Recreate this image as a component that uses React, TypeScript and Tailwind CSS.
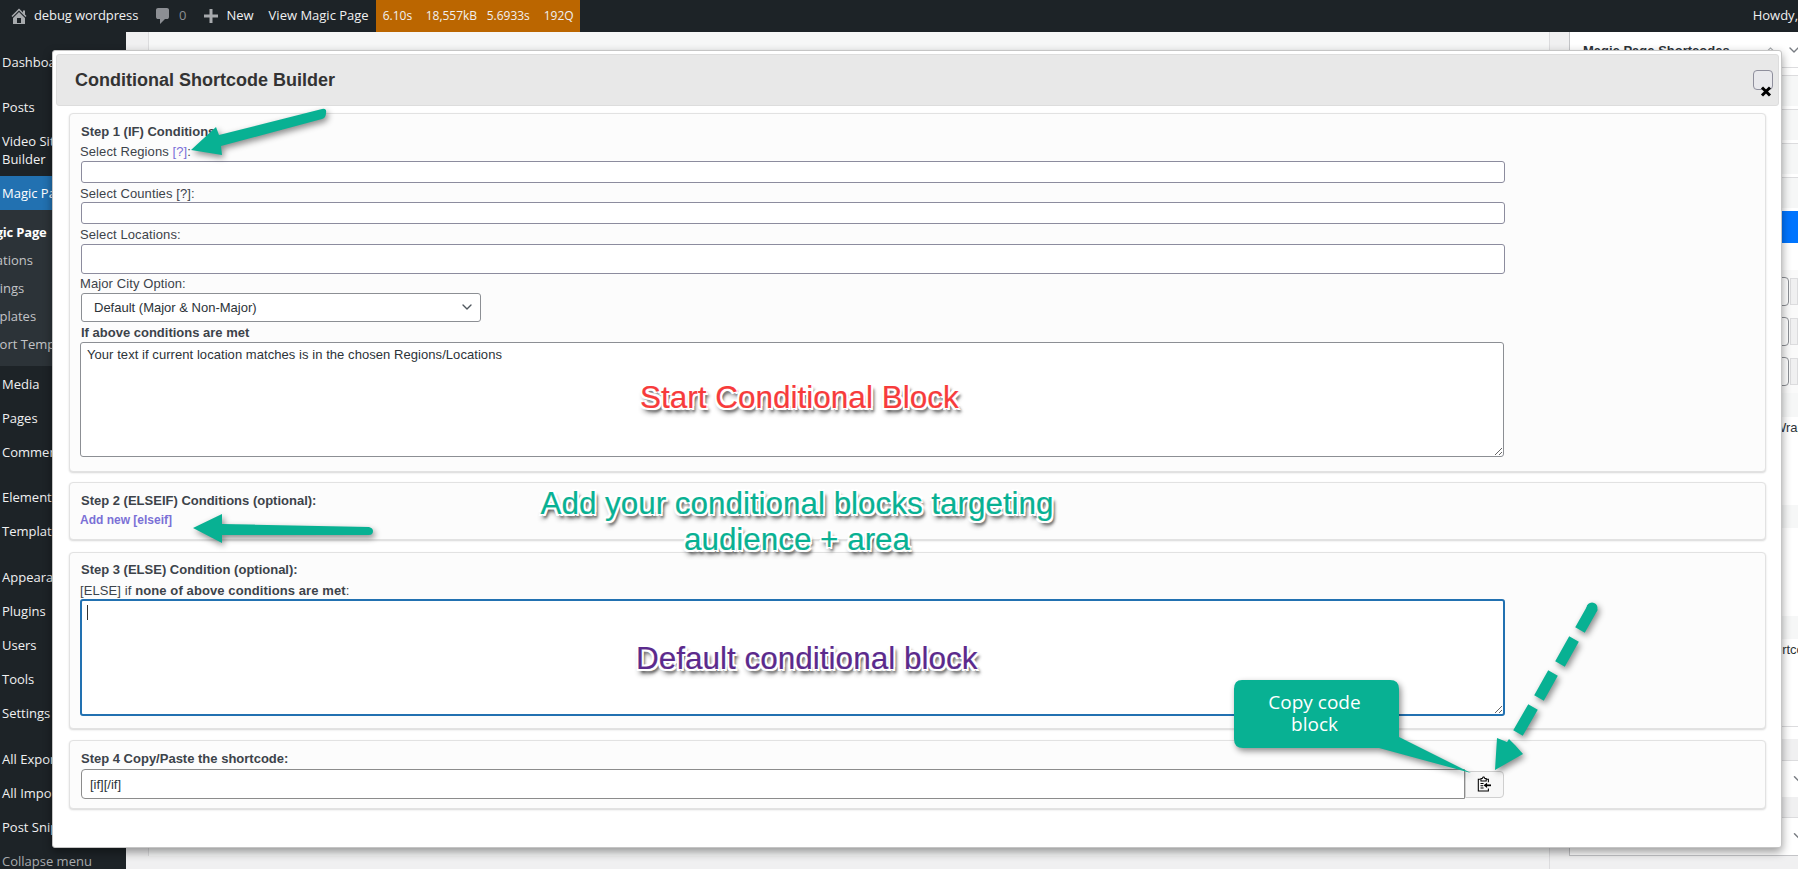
import { ChevronDown, ChevronUp } from "lucide-react";

const sans = "font-['Open_Sans','Noto_Sans',sans-serif]";
const arial = "font-['Liberation_Sans',Arial,sans-serif]";
const haloShadow =
  "[-webkit-text-stroke:0.2px_currentColor] [text-shadow:1px_0_0_#fff,-1px_0_0_#fff,0_1px_0_#fff,0_-1px_0_#fff,2px_2px_0_#fff,-2px_-2px_0_#fff,2px_-2px_0_#fff,-2px_2px_0_#fff,3px_4px_3px_rgba(0,0,0,0.6),1px_5px_5px_rgba(0,0,0,0.45)]";

function AdminBar() {
  return (
    <div className={`flex h-8 shrink-0 items-center bg-[#1d2327] text-[13px] text-[#f0f0f1] ${sans}`}>
      <svg viewBox="0 0 20 20" className="ml-[9px] h-5 w-5 fill-[#a7aaad]">
        <path d="M16 8.5l1.53 1.53-1.06 1.06L10 4.62l-6.47 6.47-1.06-1.06L10 2.5l4 4v-2h2v4zm-6-2.46l6 5.99V18H4v-5.97zM12 17v-5H8v5h4z" />
      </svg>
      <span className="ml-[5px] w-[105px] tracking-[-0.1px]">debug wordpress</span>
      <svg viewBox="0 0 20 20" className="ml-[14px] h-5 w-5 fill-[#8c8f94]">
        <path d="M5 2h9q.82 0 1.41.59T16 4v7q0 .82-.59 1.41T14 13h-2l-5 5v-5H5q-.82 0-1.41-.59T3 11V4q0-.82.59-1.41T5 2z" />
      </svg>
      <span className="ml-[6px] text-[#8c8f94]">0</span>
      <svg viewBox="0 0 20 20" className="ml-[15px] h-5 w-5 fill-[#a7aaad]">
        <path d="M17 8.5v3h-5.5V17h-3v-5.5H3v-3h5.5V3h3v5.5H17z" />
      </svg>
      <span className="ml-[5px]">New</span>
      <span className="ml-[15px]">View Magic Page</span>
      <div className="ml-[7px] flex h-8 w-[204px] items-center bg-[#bb6600] pl-[7px] text-[12px]">
        <span className="w-[43px]">6.10s</span>
        <span className="w-[61px]">18,557kB</span>
        <span className="w-[57px]">5.6933s</span>
        <span>192Q</span>
      </div>
      <span className="ml-auto whitespace-nowrap">Howdy,</span>
    </div>
  );
}

function MenuItem({ label, className = "" }: { label: string; className?: string }) {
  return (
    <div className={`flex h-[34px] items-center whitespace-nowrap pl-[2px] pt-px ${className}`}>{label}</div>
  );
}

function Sidebar() {
  return (
    <aside className={`w-[126px] shrink-0 overflow-hidden bg-[#1d2327] pt-[13px] text-[13px] text-[#f0f0f1] ${sans}`}>
      <MenuItem label="Dashboard" />
      <MenuItem label="Posts" className="mt-[11px]" />
      <div className="flex h-[52px] flex-col justify-center pl-[2px] leading-[18px]">
        <span>Video Site</span>
        <span>Builder</span>
      </div>
      <MenuItem label="Magic Page" className="bg-[#2271b1] text-white" />
      <div className="bg-[#2c3338] pb-[7px] pt-[9px] text-[#c3c4c7]">
        <div className="-ml-[24px] flex h-[28px] items-center font-bold tracking-[-0.2px] whitespace-nowrap text-white">Magic Page</div>
        <div className="-ml-[25px] flex h-[28px] items-center whitespace-nowrap">Locations</div>
        <div className="-ml-[24px] flex h-[28px] items-center whitespace-nowrap">Settings</div>
        <div className="-ml-[27px] flex h-[28px] items-center whitespace-nowrap">Templates</div>
        <div className="-ml-[24px] flex h-[28px] items-center whitespace-nowrap">Import Templates</div>
      </div>
      <MenuItem label="Media" className="mt-px" />
      <MenuItem label="Pages" />
      <MenuItem label="Comments" />
      <MenuItem label="Elementor" className="mt-[11px]" />
      <MenuItem label="Templates" />
      <MenuItem label="Appearance" className="mt-[12px]" />
      <MenuItem label="Plugins" />
      <MenuItem label="Users" />
      <MenuItem label="Tools" />
      <MenuItem label="Settings" />
      <MenuItem label="All Export" className="mt-[12px]" />
      <MenuItem label="All Import" />
      <MenuItem label="Post Snippets" />
      <MenuItem label="Collapse menu" className="text-[#a7aaad]" />
    </aside>
  );
}

function PanelRow() {
  return <div className="mb-[3px] h-[31px] border-t border-[#dcdcde] bg-[#f6f7f7]" />;
}

function PanelButton() {
  return (
    <div className="flex h-[29px]">
      <div className="w-[219px] rounded-[4px] border border-[#8c8f94] bg-white" />
      <div className="my-px ml-px flex-1 border border-[#dcdcde] bg-[#f0f0f1]" />
    </div>
  );
}

function RightPanel() {
  return (
    <div className={`h-[824px] w-[229px] shrink-0 overflow-hidden border-b border-l border-[#c3c4c7] bg-white text-[13px] text-[#2c3338] ${arial}`}>
      <div className="flex h-[36px] items-center border-b border-[#dcdcde] pl-[13px] text-[13px] font-bold">
        <span className="mt-[3px]">Magic Page Shortcodes</span>
        <ChevronUp className="ml-auto h-[13px] w-[13px] text-[#a7aaad]" />
        <ChevronDown className="-mr-[4px] ml-[9px] h-[16px] w-[16px] text-[#787c82]" />
      </div>
      <div className="h-[7px]" />
      <PanelRow />
      <PanelRow />
      <PanelRow />
      <PanelRow />
      <div className="h-[32px] bg-[#0075ff]" />
      <div className="h-[27px]" />
      <div className="flex flex-col gap-[11px] bg-[#fafafa] pb-[7px] pt-[7px]">
        <PanelButton />
        <PanelButton />
        <PanelButton />
      </div>
      <div className="h-[24px] bg-[#f6f7f7]" />
      <div className="h-[88px] pl-[204px] pt-[3px] leading-[16px] whitespace-nowrap">Wrap Content</div>
      <div className="h-[23px] bg-[#f6f7f7]" />
      <div className="h-[88px]" />
      <div className="h-[23px] bg-[#f6f7f7]" />
      <div className="h-[87px] pl-[189px] pt-[3px] leading-[16px] whitespace-nowrap">Shortcode</div>
      <div className="h-[13px] border-t border-[#dcdcde]" />
      <div className="h-[22px] border-b border-[#dcdcde] bg-[#f0f0f1]" />
      <div className="flex h-[36px] items-center pl-[220px]">
        <ChevronDown className="h-[18px] w-[18px] shrink-0 text-[#787c82]" />
      </div>
      <div className="h-[21px] border-b border-[#dcdcde] bg-[#f0f0f1]" />
      <div className="flex h-[36px] items-center pl-[220px]">
        <ChevronDown className="h-[18px] w-[18px] shrink-0 text-[#787c82]" />
      </div>
    </div>
  );
}

function Card({ className = "", children }: { className?: string; children: React.ReactNode }) {
  return (
    <section className={`rounded-[4px] border border-[#e2e2e2] bg-[#fcfcfc] pl-[11px] shadow-[0_1px_2px_rgba(0,0,0,0.16)] ${className}`}>
      {children}
    </section>
  );
}

function Heading({ className = "", children }: { className?: string; children: React.ReactNode }) {
  return <div className={`h-4 text-[13px] font-bold leading-4 text-[#3c434a] ${className}`}>{children}</div>;
}

function FieldLabel({ className = "", children }: { className?: string; children: React.ReactNode }) {
  return <div className={`-ml-px h-4 text-[13px] leading-[18px] tracking-[0.1px] text-[#3c434a] ${className}`}>{children}</div>;
}

function Modal() {
  return (
    <div className={`absolute left-[52px] top-[50px] h-[798px] w-[1730px] rounded-[3px] border border-[#c5c5c5] bg-white p-[3px] shadow-[0_4px_10px_rgba(0,0,0,0.4)] ${arial}`}>
      <header className="flex h-[52px] w-[1723px] items-center justify-between rounded-[3px] border border-[#dddddd] bg-[#e8e8e8] pl-[18px] pr-[5px]">
        <h1 className="text-[18px] font-bold text-[#333333]">Conditional Shortcode Builder</h1>
        <button className="relative h-5 w-5 rounded-[4px] border border-[#8f8f9d] bg-[#e9e9ed]">
          <svg viewBox="0 0 12 11" className="absolute left-[6px] top-[15px] h-[11px] w-[12px] stroke-black stroke-[3px]">
            <path d="M2 1.5l8 8M10 1.5l-8 8" />
          </svg>
        </button>
      </header>

      <div className="ml-[13px] mt-[7px] w-[1697px]">
        <Card className="h-[359px] pt-[10px]">
          <Heading>Step 1 (IF) Conditions</Heading>
          <FieldLabel className="mt-[3px]">
            Select Regions <span className="text-[#7b6fd8]">[?]</span>:
          </FieldLabel>
          <input className="mt-[2px] block h-[22px] w-[1424px] rounded-[3px] border border-[#8c8c9e] bg-white" />
          <FieldLabel className="mt-[2px]">Select Counties [?]:</FieldLabel>
          <input className="mt-px block h-[22px] w-[1424px] rounded-[3px] border border-[#8c8c9e] bg-white" />
          <FieldLabel className="mt-[2px]">Select Locations:</FieldLabel>
          <input className="mt-[2px] block h-[30px] w-[1424px] rounded-[3px] border border-[#8c8c9e] bg-white" />
          <FieldLabel className="mt-px">Major City Option:</FieldLabel>
          <div className="relative mt-[2px] h-[29px] w-[400px]">
            <select className="h-full w-full appearance-none rounded-[3px] border border-[#8c8f94] bg-white pl-[12px] text-[13px] text-[#2c3338]" defaultValue="default">
              <option value="default">Default (Major &amp; Non-Major)</option>
            </select>
            <ChevronDown className="absolute right-[6px] top-[6px] h-[16px] w-[16px] text-[#50575e]" />
          </div>
          <Heading className="mt-[3px]">If above conditions are met</Heading>
          <textarea
            className="-ml-px mt-px block h-[115px] w-[1424px] rounded-[3px] border border-[#8c8f94] bg-white px-[6px] pb-[3px] pt-[4px] text-[13px] leading-[16px] tracking-[0.06px] text-[#2c3338]"
            defaultValue="Your text if current location matches is in the chosen Regions/Locations"
          />
        </Card>

        <Card className="mt-[10px] h-[58px] pt-[10px]">
          <Heading>Step 2 (ELSEIF) Conditions (optional):</Heading>
          <div className="-ml-px mt-[3px] h-4 text-[12px] font-bold leading-4 text-[#7a70d6]">Add new [elseif]</div>
        </Card>

        <Card className="mt-[12px] h-[177px] pt-[9px]">
          <Heading>Step 3 (ELSE) Condition (optional):</Heading>
          <FieldLabel className="mt-[4px]">
            [ELSE] if <b>none of above conditions are met</b>:
          </FieldLabel>
          <div className="relative mt-px h-[117px]">
            <textarea className="-ml-px block h-[117px] w-[1425px] rounded-[3px] border-2 border-[#2271b1] bg-white" />
            <div className="absolute left-[6px] top-[6px] h-[15px] w-px bg-[#333333]" />
          </div>
        </Card>

        <Card className="mt-[11px] h-[69px] pt-[10px]">
          <Heading>Step 4 Copy/Paste the shortcode:</Heading>
          <div className="mt-[2px] flex h-[30px] w-[1423px] items-center">
            <input
              className="h-[30px] w-[1384px] rounded-l-[4px] border border-[#8c8c8c] bg-white px-[8px] text-[13px] text-[#2c3338]"
              defaultValue="[if][/if]"
            />
            <button className="flex h-[27px] w-[39px] items-center justify-center rounded-r-[4px] border border-[#cfcfcf] bg-[#f7f7f7] pr-[2px]">
              <svg viewBox="0 0 16 18" className="h-[16px] w-[14px] fill-none stroke-black stroke-[1.2]">
                <path d="M10.5 3.5H13V7M4 3.5H1.5V17H13V14" />
                <path d="M4.5 5.5V2.8H6L7 1h1l1 1.8h1.5v2.7z" />
                <path d="M4 8.5h3.5M4 11h3M4 13.5h3.5" />
                <path d="M16 10.5H10" strokeWidth="2" />
                <path d="M11.5 7.5l-4 3 4 3z" fill="#000" stroke="none" />
              </svg>
            </button>
          </div>
        </Card>
      </div>
    </div>
  );
}

function Annotations() {
  return (
    <>
      <svg viewBox="0 0 1798 869" className="pointer-events-none absolute left-0 top-0 h-[869px] w-[1798px] fill-[#08b193] drop-shadow-[2px_3px_3px_rgba(0,0,0,0.45)]">
        {/* Step 1 arrow */}
        <path d="M191 150L216 127L219 135L322 109Q327 108 326 113Q326 118 322 119L221 146L222 155Z" />
        {/* Step 2 arrow */}
        <path d="M193 528L222 514L222 524L369 527Q373 528 373 531Q373 535 369 535L222 535L222 543Z" />
        {/* dashed arrow to the copy button */}
        <path d="M1593 607L1580 630M1574 639L1560 664M1553 673L1539 698M1533 707L1518 733" fill="none" stroke="#08b193" strokeWidth="11" />
        <circle cx="1592" cy="608" r="5.5" />
        <path d="M1495 770L1497 738L1507 742L1509 739L1515 745L1523 754Z" />
        {/* callout */}
        <path d="M1242 680H1390Q1399 680 1399 689V737L1471 773L1379 748H1243Q1234 748 1234 739V689Q1234 680 1242 680Z" />
      </svg>

      <div className={`absolute left-[1232px] top-[691px] w-[165px] text-center text-[19px] leading-[22px] text-white ${sans}`}>
        Copy code
        <br />
        block
      </div>

      <div className={`absolute left-[640px] top-[380px] whitespace-nowrap text-[31.5px] leading-[34px] text-[#f73b3b] ${arial} ${haloShadow}`}>
        Start Conditional Block
      </div>
      <div className={`absolute left-[497px] top-[486px] w-[600px] text-center text-[31.4px] leading-[36px] text-[#08b193] ${arial} ${haloShadow}`}>
        Add your conditional blocks targeting
        <br />
        audience + area
      </div>
      <div className={`absolute left-[636px] top-[641px] whitespace-nowrap text-[31.5px] leading-[34px] text-[#5b2a8c] ${arial} ${haloShadow}`}>
        Default conditional block
      </div>
    </>
  );
}

export default function App() {
  return (
    <div className="relative flex h-[869px] w-full flex-col overflow-hidden bg-[#f0f0f1]">
      <AdminBar />
      <div className="flex min-h-0 flex-1">
        <Sidebar />
        <div className="h-[824px] w-[23px] border-r border-[#dcdcde]" />
        <div className="h-[824px] flex-1 bg-[#f6f7f7]" />
        <div className="w-[20px] border-l border-[#dcdcde]" />
        <RightPanel />
      </div>
      <Modal />
      <Annotations />
    </div>
  );
}
